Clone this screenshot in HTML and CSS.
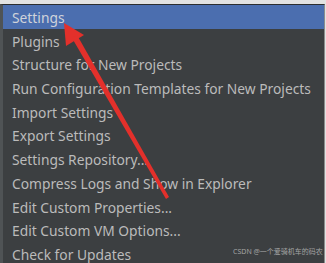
FILE: index.html
```html
<!DOCTYPE html>
<html lang="en">
<head>
    <meta charset="UTF-8">
    <title>Settings menu</title>
    <link rel="stylesheet" href="styles.css">
</head>
<body>
    <div class="menu">
        <div class="item active">Settings</div>
        <div class="item">Plugins</div>
        <div class="item">Structure for New Projects</div>
        <div class="item">Run Configuration Templates for New Projects</div>
        <div class="item">Import Settings</div>
        <div class="item">Export Settings</div>
        <div class="item">Settings Repository...</div>
        <div class="item">Compress Logs and Show in Explorer</div>
        <div class="item">Edit Custom Properties...</div>
        <div class="item">Edit Custom VM Options...</div>
        <div class="item">Check for Updates</div>
    </div>

    <div class="watermark">CSDN @一个爱骑机车的码农</div>

    <!-- red arrow drawn over the menu -->
    <svg class="arrow" width="326" height="263" viewBox="0 0 326 263">
        <polygon points="64,23 66,46 84,35" fill="#e3302b"/>
        <polygon points="72,38 77,35 169,197 166,199" fill="#e3302b"/>
    </svg>
</body>
</html>
```

FILE: styles.css
```css
body {
    margin: 0;
    background: #e2e2e2;
    font-family: "Noto Sans", "Open Sans", sans-serif;
    overflow: hidden;
    position: relative;
    height: 263px;
}

.menu {
    margin-top: 4px;
    background-color: #3c3f41;
    border-top: 1px solid #2b2d2f;
    border-left: 3px solid #4f5355;
    border-right: 1px solid #8c8c8c;
    width: 321px;
    height: 258px;
    overflow: hidden;
}

.item {
    height: 20.7px;
    padding-top: 3px;
    line-height: 20.7px;
    padding-left: 9px;
    font-size: 13.8px;
    color: #bbbbbb;
    white-space: nowrap;
}

.item.active {
    background-color: #4b6eaf;
    color: #cfd3da;
}

.watermark {
    position: absolute;
    left: 233px;
    top: 246px;
    font-size: 7px;
    color: #a3a3a3;
    font-family: "Noto Sans", "Noto Sans CJK SC", sans-serif;
    white-space: nowrap;
}

.arrow {
    position: absolute;
    left: 0;
    top: 0;
}
```
